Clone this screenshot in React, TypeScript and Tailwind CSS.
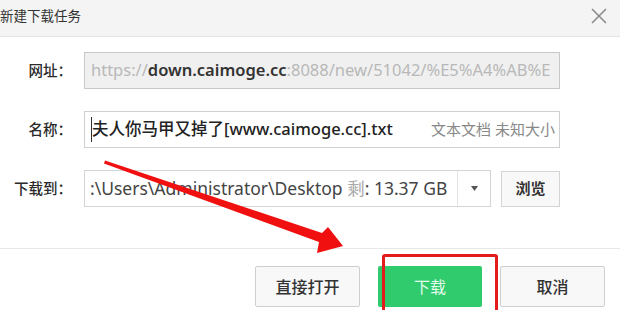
const font = { fontFamily: '"Noto Sans", "Noto Sans CJK SC", sans-serif' }

function Label({ text }: { text: string }) {
  return <div className="w-[72px] shrink-0 text-right text-[14.5px] font-medium text-[#2a2a2a]">{text}</div>
}

export default function App() {
  return (
    <div className="relative h-[310px] w-[620px] overflow-hidden bg-white" style={font}>
      {/* Title bar */}
      <div className="flex h-[37px] items-center justify-between border-b border-[#e4e4e4] bg-[#f4f4f4] pb-[4px] pr-[12px]">
        <span className="text-[13.5px] text-[#333]">新建下载任务</span>
        <svg width="18" height="18" viewBox="0 0 18 18">
          <path d="M2 2 L16 16 M16 2 L2 16" stroke="#888" strokeWidth="1.5" />
        </svg>
      </div>

      {/* Form */}
      <div className="flex flex-col gap-[22px] pt-[15px] pr-[60px]">
        <div className="flex items-center gap-[12px]">
          <Label text="网址：" />
          <div className="flex h-[37px] flex-1 items-center overflow-hidden whitespace-nowrap border border-[#c8c8c8] bg-[#f0f0f0] px-[6px] text-[16.5px]">
            <span className="text-[#b8b8b8]">https://</span>
            <span className="font-semibold text-[#333]">down.caimoge.cc</span>
            <span className="text-[#b8b8b8]">:8088/new/51042/%E5%A4%AB%E</span>
          </div>
        </div>

        <div className="flex items-center gap-[12px]">
          <Label text="名称：" />
          <div className="flex h-[37px] flex-1 items-center justify-between whitespace-nowrap border border-[#cfcfcf] bg-white pl-[6px] pr-[4px]">
            <span className="border-l border-[#333] text-[16.5px] font-medium text-[#222]">夫人你马甲又掉了[www.caimoge.cc].txt</span>
            <span className="text-[15px] text-[#888]">文本文档 未知大小</span>
          </div>
        </div>

        <div className="flex items-center gap-[12px]">
          <Label text="下载到：" />
          <div className="flex h-[37px] w-[407px] items-center border border-[#d4d4d4] bg-white text-[17.5px]">
            <div className="flex-1 overflow-hidden whitespace-nowrap pl-[5px] text-[#444]">
              :\Users\Administrator\Desktop <span className="text-[#aaa]">剩</span>: 13.37 GB
            </div>
            <div className="flex h-full w-[33px] items-center justify-center border-l border-[#e4e4e4]">
              <svg width="7" height="5" viewBox="0 0 7 5"><path d="M0 0 H7 L3.5 5 Z" fill="#555" /></svg>
            </div>
          </div>
          <button className="-ml-[2px] h-[36px] w-[59px] border border-[#d4d4d4] bg-[#f8f8f8] text-[15px] font-semibold text-[#333]">
            浏览
          </button>
        </div>
      </div>

      {/* Footer */}
      <div className="absolute inset-x-0 top-[248px] border-t border-[#e8e8e8]" />
      <div className="flex justify-end gap-[18px] pt-[59px] pr-[15px]">
        <button className="h-[41px] w-[105px] rounded-[2px] border border-[#cfcfcf] bg-[#f8f8f8] text-[16px] font-medium text-[#333]">
          直接打开
        </button>
        <button className="h-[41px] w-[104px] rounded-[2px] bg-[#2fcb6c] text-[16px] text-[#e4fbec]">
          下载
        </button>
        <button className="h-[41px] w-[105px] rounded-[2px] border border-[#cfcfcf] bg-[#f8f8f8] text-[16px] font-medium text-[#333]">
          取消
        </button>
      </div>

      {/* Red annotation box */}
      <div className="absolute left-[382px] top-[254px] h-[60px] w-[116px] rounded-[3px] border-[3px] border-[#e31b1b]" />

      {/* Red arrow */}
      <svg className="pointer-events-none absolute left-0 top-0" width="620" height="310">
        <polygon
          points="105,160.5 322,233 328,227 343,246 317,253 319,242 104,163.5"
          fill="#f01010"
        />
      </svg>
    </div>
  )
}
